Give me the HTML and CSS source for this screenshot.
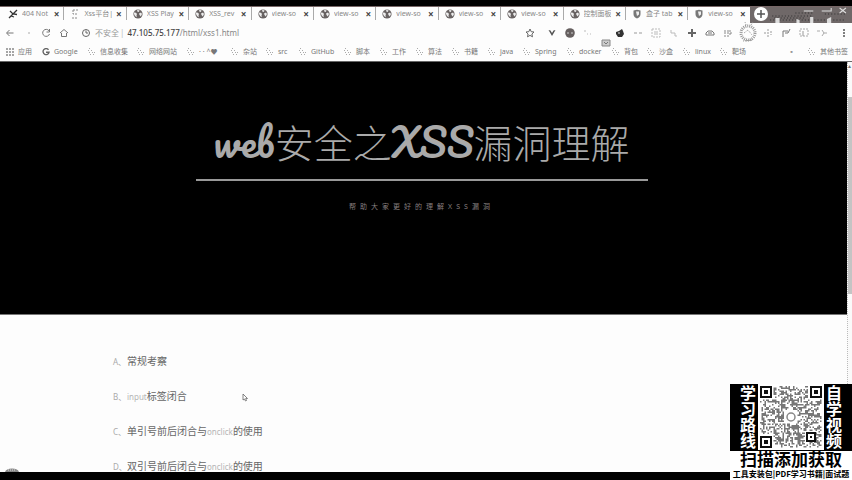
FILE: index.html
```html
<!DOCTYPE html>
<html lang="zh-CN">
<head>
<meta charset="utf-8">
<title>web安全之XSS漏洞理解</title>
<link rel="stylesheet" href="styles.css">
</head>
<body>
<svg class="defs" aria-hidden="true">
  <symbol id="globe" viewBox="0 0 10 10"><circle cx="5" cy="5" r="4.6" fill="#686262"/><path d="M1 3.5l2 .2 1 1.3-.5 1.2.3 2L2 7 1 5zM4 1l2.500.3L6 2.800 4.700 3zM6 4.500l2-1 1 1.500-1.200 2.500L6.500 6z" fill="#eee"/></symbol>
  <symbol id="bird" viewBox="0 0 10 10"><path d="M1 9l4-4 4-4M2 2l3 3 4 .5M3 7l3 1" fill="none" stroke="#333" stroke-width="1.300"/></symbol>
  <symbol id="page" viewBox="0 0 10 10"><path d="M3 1h6M3 1v4h4M2 9h6" fill="none" stroke="#888" stroke-dasharray="2 1"/></symbol>
  <symbol id="shield" viewBox="0 0 10 10"><path d="M1.500 1.500L5 .7l3.500.8V5Q8.500 8 5 9.500 1.500 8 1.500 5z" fill="#777"/><path d="M4 2.500h3v3L5 7z" fill="#eee"/></symbol>
  <symbol id="folder" viewBox="0 0 8 8"><path d="M1 0h2M0 2h2M3 2h2M1 4h2M4 4h3M2 6h2M5 6h2M4 8h2" transform="translate(0 .5)" stroke="#aaa" stroke-dasharray="1 1"/></symbol>
  <symbol id="apps" viewBox="0 0 8 8"><path d="M0 1h8M0 4h8M0 7h8" stroke="#888" stroke-width="1.600" stroke-dasharray="2 1"/></symbol>
  <symbol id="gee" viewBox="0 0 8 8"><path d="M6.500 1.800A3 3 0 1 0 7 4.300H4" fill="none" stroke="#666" stroke-width="1.400"/></symbol>
</svg>

<header class="browser">
  <div class="strip">
    <nav class="tabs" aria-label="标签页">
      <div class="tab"><svg><use href="#bird"/></svg><span>404 Not</span><button aria-label="关闭">×</button></div>
      <div class="tab"><svg><use href="#page"/></svg><span>Xss平台|</span><button aria-label="关闭">×</button></div>
      <div class="tab"><svg><use href="#globe"/></svg><span>XSS Play</span><button aria-label="关闭">×</button></div>
      <div class="tab"><svg><use href="#globe"/></svg><span>XSS_rev</span><button aria-label="关闭">×</button></div>
      <div class="tab"><svg><use href="#globe"/></svg><span>view-so</span><button aria-label="关闭">×</button></div>
      <div class="tab"><svg><use href="#globe"/></svg><span>view-so</span><button aria-label="关闭">×</button></div>
      <div class="tab"><svg><use href="#globe"/></svg><span>view-so</span><button aria-label="关闭">×</button></div>
      <div class="tab"><svg><use href="#globe"/></svg><span>view-so</span><button aria-label="关闭">×</button></div>
      <div class="tab"><svg><use href="#globe"/></svg><span>view-so</span><button aria-label="关闭">×</button></div>
      <div class="tab"><svg><use href="#globe"/></svg><span>控制面板</span><button aria-label="关闭">×</button></div>
      <div class="tab"><svg><use href="#shield"/></svg><span>盒子 tab</span><button aria-label="关闭">×</button></div>
      <div class="tab"><svg><use href="#shield"/></svg><span>view-so</span><button aria-label="关闭">×</button></div>
    </nav>
    <div class="window-bar">
      <button class="new-tab" aria-label="新标签页"><svg viewBox="0 0 14 14"><path d="M7 3v8M3 7h8" stroke="#555" stroke-width="1.500"/></svg></button>
      <svg class="window-art" viewBox="0 0 80 16" preserveAspectRatio="none">
        <path d="M2 13h70M4 9h38M6 11h30M26 6h18M54 7h20" stroke="#333" stroke-dasharray="1 2"/>
        <path d="M34 4h9M51 4h9V1M68 1l6 5M74 1l-6 5" fill="none" stroke="#ddd"/>
        <path d="M7 16v-5h4v5M27 16v-4l3 1v3M40 16v-6h3v6M56 16v-4l4-2v6" fill="#ddd"/>
      </svg>
    </div>
  </div>

  <div class="toolbar">
    <div class="nav-buttons">
      <button aria-label="后退"><svg viewBox="0 0 10 10"><path d="M8.500 5H2M4.500 2L1.500 5l3 3" fill="none" stroke="#777"/></svg></button>
      <button aria-label="前进"><svg viewBox="0 0 10 10"><path d="M6 4v2" stroke="#aaa"/></svg></button>
      <button aria-label="刷新"><svg viewBox="0 0 10 10"><path d="M8 2.800A3.500 3.500 0 1 0 8.500 6M8.500 1v3h-3" fill="none" stroke="#777"/></svg></button>
      <button aria-label="主页"><svg viewBox="0 0 10 10"><path d="M1 5l4-3.500L9 5M2.500 5v3.500h5V5" fill="none" stroke="#777"/></svg></button>
    </div>
    <div class="address">
      <svg viewBox="0 0 10 10"><circle cx="5" cy="5" r="3.500" fill="none" stroke="#666"/><path d="M5 2.500V5h2" fill="none" stroke="#666"/></svg>
      <span class="insecure">不安全</span><span class="bar">|</span>
      <span class="url"><b>47.105.75.177</b>/html/xss1.html</span>
    </div>
    <div class="extensions">
      <svg viewBox="0 0 10 10"><path d="M5 1l1.200 2.700 2.800.3-2.100 2 .6 2.800L5 7.400 2.500 8.800 3.100 6 1 4l2.800-.3z" fill="none" stroke="#666"/></svg>
      <svg viewBox="0 0 10 10"><path d="M1.500 2l3.500 6 3.500-6-2 .5L5 5 3.500 2.500z" fill="#555"/></svg>
      <svg viewBox="0 0 10 10"><circle cx="5" cy="5" r="4.800" fill="#655f5f"/><path d="M2 5h2M6 5h2" stroke="#ccc"/></svg>
      <svg viewBox="0 0 10 10"><path d="M2 2v2M4 6h1M7 6h1" stroke="#bbb"/></svg>
      <svg class="low" viewBox="0 0 10 10"><path d="M1 2h8v6H1z" fill="#ccc" stroke="#888"/><path d="M3 4l2 2 2-2" fill="none" stroke="#777"/></svg>
      <svg viewBox="0 0 10 10"><path d="M1 4l3-1 3-2 1 2 1 3-2 3H3L1 6z" fill="#333"/><path d="M3 5h2" stroke="#ddd"/></svg>
      <svg viewBox="0 0 10 10"><path d="M1 5h3M6 5h3" stroke="#999"/></svg>
      <svg viewBox="0 0 10 10"><rect x="1" y="1" width="8" height="8" fill="none" stroke="#bbb" stroke-dasharray="2 1"/><path d="M3 4h4M3 6h4" stroke="#bbb"/></svg>
      <svg viewBox="0 0 10 10"><path d="M2 2v3h4v3h2" fill="none" stroke="#bbb"/></svg>
      <svg viewBox="0 0 10 10"><path d="M5 1v8M1 5h8" stroke="#666" stroke-width="2"/></svg>
      <svg viewBox="0 0 10 10"><path d="M1 7V5l2-2h4l2 2v2zM3 5h4" fill="none" stroke="#777"/></svg>
      <svg viewBox="0 0 10 10"><path d="M1 3h5M1 5h8M1 8h6M7 2v6" stroke="#888" stroke-dasharray="2 1"/></svg>
      <svg class="badge" viewBox="0 0 20 22"><circle cx="10" cy="11" r="7" fill="none" stroke="#999" stroke-width="3" stroke-dasharray="1 1"/><path d="M8 3L7 0M13 3l2-3M5 19l10-1M6 11l4-3 4 5" stroke="#999" fill="none" stroke-dasharray="1 1"/></svg>
      <svg viewBox="0 0 10 10"><path d="M1 5h2M5 1v8M8 3v4" stroke="#999" stroke-dasharray="2 1"/></svg>
      <svg viewBox="0 0 10 10"><path d="M2 9V3h5M4 5h3l2-4" fill="none" stroke="#777"/></svg>
      <svg viewBox="0 0 10 10"><rect x="1" y="1" width="8" height="7" fill="none" stroke="#aaa" stroke-dasharray="2 1"/><path d="M4 3v5" stroke="#999"/></svg>
      <svg viewBox="0 0 10 10"><path d="M0 3h3M5 2l2 3-2 3M7 5h3" fill="none" stroke="#aaa"/></svg>
      <svg class="menu" viewBox="0 0 10 10"><path d="M5 1v2M5 4v2M5 7v2" stroke="#555" stroke-width="1.500"/></svg>
    </div>
  </div>

  <nav class="bookmarks" aria-label="书签">
    <a href="#"><svg><use href="#apps"/></svg>应用</a>
    <a href="#"><svg><use href="#gee"/></svg>Google</a>
    <a href="#"><svg><use href="#folder"/></svg>信息收集</a>
    <a href="#"><svg><use href="#folder"/></svg>网络网站</a>
    <a href="#"><svg><use href="#folder"/></svg>· · ^♥</a>
    <a href="#"><svg><use href="#folder"/></svg>杂站</a>
    <a href="#"><svg><use href="#folder"/></svg>src</a>
    <a href="#"><svg><use href="#folder"/></svg>GitHub</a>
    <a href="#"><svg><use href="#folder"/></svg>脚本</a>
    <a href="#"><svg><use href="#folder"/></svg>工作</a>
    <a href="#"><svg><use href="#folder"/></svg>算法</a>
    <a href="#"><svg><use href="#folder"/></svg>书籍</a>
    <a href="#"><svg><use href="#folder"/></svg>java</a>
    <a href="#"><svg><use href="#folder"/></svg>Spring</a>
    <a href="#"><svg><use href="#folder"/></svg>docker</a>
    <a href="#"><svg><use href="#folder"/></svg>背包</a>
    <a href="#"><svg><use href="#folder"/></svg>沙盒</a>
    <a href="#"><svg><use href="#folder"/></svg>linux</a>
    <a href="#"><svg><use href="#folder"/></svg>靶场</a>
    <span class="more">▪</span>
    <a href="#"><svg><use href="#folder"/></svg>其他书签</a>
  </nav>
</header>

<div class="viewport">
  <main>
    <section class="hero">
      <h1><span class="script">web</span>安全之<span class="script">XSS</span>漏洞理解</h1>
      <p>帮助大家更好的理解XSS漏洞</p>
    </section>
    <ul class="lessons">
      <li><i>A、</i>常规考察</li>
      <li><i>B、</i><em>input</em>标签闭合</li>
      <li><i>C、</i>单引号前后闭合与<em>onclick</em>的使用</li>
      <li><i>D、</i>双引号前后闭合与<em>onclick</em>的使用</li>
    </ul>
    <svg class="pointer" viewBox="0 0 6 9"><path d="M1 1v6l1.500-1 1 2 1-.5-.8-2H5.500z" fill="#fff" stroke="#666" stroke-width=".8"/></svg>
    <svg class="bubble" viewBox="0 0 14 4"><path d="M0 4Q1 .5 7 .5T14 4z" fill="#888"/><path d="M3 2h8" stroke="#ddd" stroke-dasharray="1 1"/></svg>
  </main>
  <div class="scrollbar"><span>▴</span><div class="thumb"></div></div>
</div>
<footer class="letterbox"></footer>

<aside class="promo">
  <div class="promo-top">
    <strong>学习路线</strong>
    <svg id="qr" viewBox="0 0 66 66" role="img" aria-label="二维码"></svg>
    <strong>自学视频</strong>
  </div>
  <p class="scan">扫描添加获取</p>
  <p class="gifts">工具安装包|PDF学习书籍|面试题</p>
</aside>
<script src="qr.js"></script>
</body>
</html>
```
FILE: styles.css
```css
* { box-sizing: border-box; }
body {
  margin: 0;
  height: 100vh;
  display: flex;
  flex-direction: column;
  overflow: hidden;
  background: #fdfdfd;
  color: #777;
  font-family: "Noto Sans", "Noto Sans CJK SC", sans-serif;
}
button { padding: 0; border: 0; background: none; color: inherit; font: inherit; }
svg { display: block; flex: none; }
p, h1, ul { margin: 0; padding: 0; }
.defs { position: absolute; width: 0; height: 0; }

.browser { flex: none; border-top: 6px solid #000; border-bottom: 1px solid #666; }
.strip { display: flex; height: 17px; border-top: 1px solid #766; }
.tabs { flex: 0 0 88%; display: flex; padding-left: 2px; }
.tab {
  flex: 1 1 0;
  min-width: 0;
  display: flex;
  align-items: center;
  gap: 4px;
  height: 13px;
  padding: 0 4px 0 6px;
  border-right: 1px solid #aaa;
  font-size: 7px;
  line-height: 12px;
  color: #888;
}
.tab:last-child { border-right: 0; }
.tab svg { width: 10px; height: 10px; }
.tab span { flex: 1; overflow: hidden; white-space: nowrap; }
.tab button { color: #444; font-size: 10px; font-weight: bold; line-height: 12px; }
.window-bar { flex: 1; display: flex; background: #6f6868; padding-left: 4px; }
.new-tab { width: 14px; height: 14px; border-radius: 50%; background: #fff; }
.window-art { flex: 1; min-width: 0; height: 16px; }

.toolbar { display: flex; align-items: center; height: 20px; padding: 0 3px 0 5px; }
.nav-buttons { display: flex; gap: 8px; }
.toolbar svg { width: 10px; height: 10px; }
.address { flex: 1; display: flex; align-items: center; padding-left: 12px; font-size: 8px; line-height: 12px; white-space: nowrap; }
.insecure { padding-left: 4px; color: #999; }
.bar { padding: 0 3px 0 1px; color: #bbb; }
.url { color: #888; }
.url b { color: #444; font-weight: 500; }
.extensions { display: flex; align-items: center; gap: 8px; }
.extensions svg:first-child { margin-right: 4px; }
.extensions .low { align-self: flex-end; margin: 0 -4px -4px 0; }
.extensions .badge { width: 20px; height: 22px; margin: 0 -3px; }
.extensions .menu { margin-left: 4px; }

.bookmarks {
  display: grid;
  grid-template-columns: 36px 46px 49px 50px 44px 35px 33px 45px 36px 36px 36px 36px 35px 44px 45px 35px 36px 37px 1fr 20px 40px;
  align-items: center;
  height: 18px;
  padding: 0 4px 0 6px;
  font-size: 7px;
  line-height: 12px;
  white-space: nowrap;
}
.bookmarks a { display: flex; align-items: center; gap: 4px; color: #777; text-decoration: none; }
.bookmarks svg { width: 8px; height: 8px; }
.more { color: #999; }

.viewport { flex: 1; min-height: 0; display: flex; }
main { position: relative; flex: 1; overflow: hidden; }
.hero {
  height: 253px;
  padding: 51px 4px 0 0;
  background: #000;
  border-bottom: 1px solid #777;
  text-align: center;
}
.hero h1 {
  width: 452px;
  height: 68px;
  margin: 0 auto;
  border-bottom: 2px solid #999;
  color: #aaa;
  font-family: KaiTi, STKaiti, "AR PL UKai CN", "Noto Sans CJK SC", sans-serif;
  font-size: 39px;
  font-weight: 300;
  line-height: 56px;
  white-space: nowrap;
}
.script { font-family: Pacifico, Lobster, "Liberation Serif", serif; font-weight: 400; line-height: 48px; }
.hero p { padding-top: 19px; color: #857e7e; font-size: 7px; line-height: 14px; letter-spacing: 4px; }
.lessons { padding: 29px 0 0 113px; list-style: none; color: #666; font-size: 10px; line-height: 35px; }
.lessons li { display: flex; }
.lessons i { width: 14px; color: #aaa; font-size: 8px; font-style: normal; white-space: nowrap; }
.lessons em { color: #b5b5b5; font-size: 8px; font-style: normal; }
.pointer { position: absolute; left: 242px; top: 331px; width: 6px; height: 9px; }
.bubble { position: absolute; left: 5px; bottom: 0; width: 14px; height: 4px; }
.scrollbar { width: 5px; border-left: 1px dotted #bbb; background: #fafafa; }
.scrollbar span { display: block; height: 35px; font-size: 6px; line-height: 8px; color: #777; }
.thumb { height: 48%; background: #c4c4c4; }
.letterbox { flex: none; height: 8px; background: #000; }

.promo { position: absolute; right: 0; bottom: 0; width: 122px; background: #fff; color: #000; font-family: "Noto Sans CJK SC", sans-serif; text-align: center; white-space: nowrap; }
.promo-top { display: flex; justify-content: center; height: 67px; background: #000; }
.promo strong { width: 20px; padding-top: 1px; writing-mode: vertical-rl; color: #fff; font-size: 16px; line-height: 20px; text-align: left; }
#qr { width: 66px; height: 66px; background: #fff; }
.scan { font-size: 17px; line-height: 16px; font-weight: 700; }
.gifts { padding-top: 1px; font-size: 8px; line-height: 12px; font-weight: bold; }
```
FILE: qr.js
```js
const svg = document.getElementById("qr");
const size = 41, step = 1.5, margin = 2;
let seed = 7, modules = "";
const random = () => (seed = (seed * 16807) % 2147483647) / 2147483647;

for (let y = 0; y < size; y++) {
  for (let x = 0; x < size; x++) {
    const corner = (x < 9 && y < 9) || (x > 31 && y < 9) || (x < 9 && y > 31);
    const align = x > 29 && x < 37 && y > 29 && y < 37;
    const centre = Math.abs(x - 20) < 5 && Math.abs(y - 20) < 5;
    const on = random() < 0.5;
    if (on && !corner && !align && !centre) {
      modules += `M${x * step + margin} ${y * step + margin}h${step}v${step}h-${step}z`;
    }
  }
}
const finder = (x, y, s) =>
  `<rect x="${x + 1}" y="${y + 1}" width="${s - 2}" height="${s - 2}" fill="none" stroke="#111" stroke-width="2"/>` +
  `<rect x="${x + 4}" y="${y + 4}" width="${s - 8}" height="${s - 8}" fill="#111"/>`;
svg.innerHTML = `<path d="${modules}" fill="#777"/>` +
  finder(2, 2, 12) + finder(52, 2, 12) + finder(2, 52, 12) + finder(48, 48, 10) +
  `<circle cx="33" cy="33" r="4" fill="none" stroke="#888" stroke-width="1.5"/>`;
```
